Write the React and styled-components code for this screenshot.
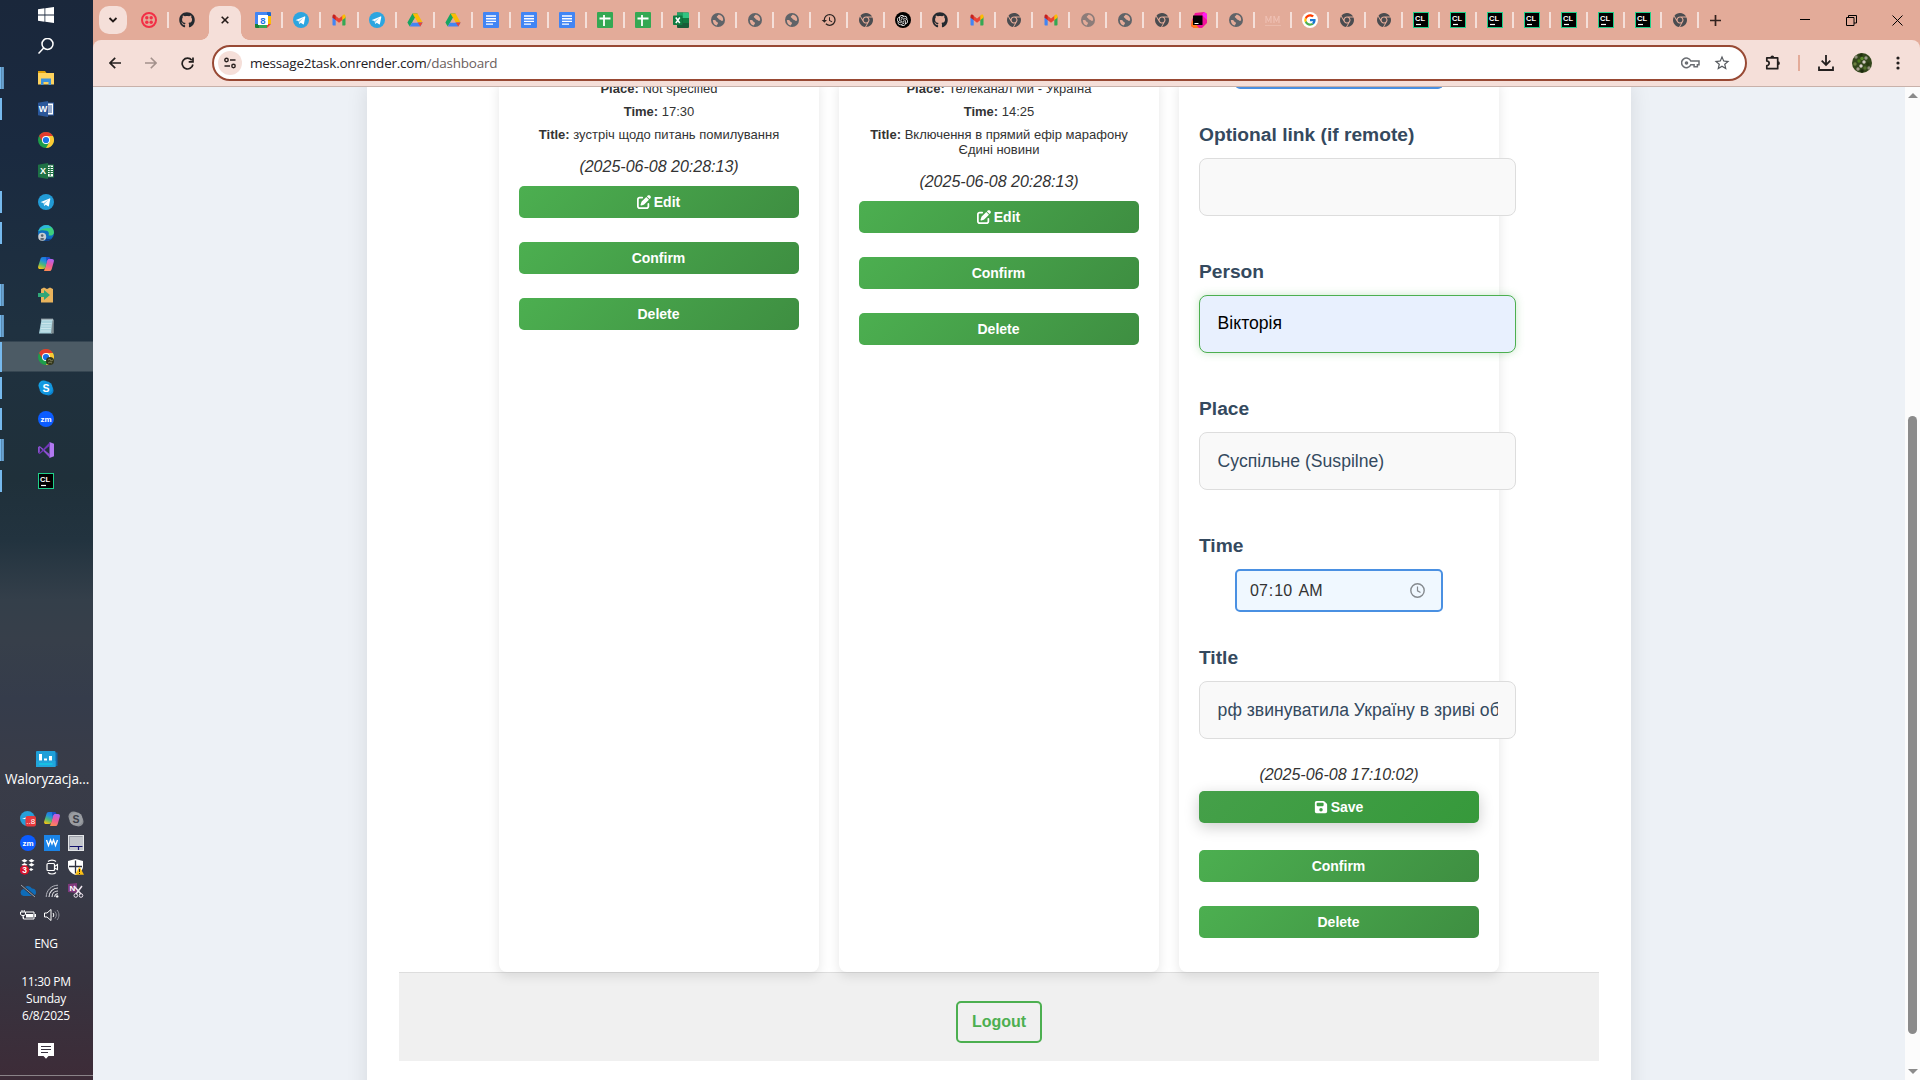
import React from "react";
import styled, { createGlobalStyle, css } from "styled-components";
import { FaGithub, FaPenToSquare, FaFloppyDisk, FaChrome } from "react-icons/fa6";
import { MdHistory, MdStarBorder } from "react-icons/md";
import { SiOpenai } from "react-icons/si";

const Global = createGlobalStyle`
  * { box-sizing: border-box; }
  html, body { margin: 0; padding: 0; overflow: hidden; }
  body { font-family: "Liberation Sans", Arial, sans-serif; color: #333; }
`;

/* ---------- small drawings ---------- */

const Drawing = styled.svg`
  display: block;
  flex: none;
`;

const Art = ({ size = 16, w, h, box = "0 0 16 16", children }) => (
  <Drawing width={w || size} height={h || size} viewBox={box} fill="none">
    {children}
  </Drawing>
);

const ChromeLogo = () => (
  <Art>
    <circle cx="8" cy="8" r="8" fill="#1e9e4a" />
    <path d="M8 4h6.93A8 8 0 0 1 8 16l3.46-6z" fill="#fcc934" />
    <path d="M1.07 4A8 8 0 0 1 14.93 4H8l-3.46 6z" fill="#e33b2e" />
    <circle cx="8" cy="8" r="4" fill="#fff" />
    <circle cx="8" cy="8" r="3.1" fill="#1a73e8" />
  </Art>
);
const ChromeProfile = () => (
  <Art>
    <circle cx="8" cy="8" r="8" fill="#1e9e4a" />
    <path d="M8 4h6.93A8 8 0 0 1 8 16l3.46-6z" fill="#fcc934" />
    <path d="M1.07 4A8 8 0 0 1 14.93 4H8l-3.46 6z" fill="#e33b2e" />
    <circle cx="8" cy="8" r="4" fill="#fff" />
    <circle cx="8" cy="8" r="3.1" fill="#1a73e8" />
    <circle cx="12" cy="12" r="4" fill="#33371c" />
    <path d="M10 11l2-1 1 2 2-1M10 14l2-1 2 1" stroke="#8c8a62" strokeWidth=".8" />
  </Art>
);
const ChromeMono = () => <FaChrome size={14} color="#4a4c50" />;
const Telegram = ({ size = 16, tint = "#2ca5e0" }) => (
  <Art size={size}>
    <circle cx="8" cy="8" r="8" fill={tint} />
    <path d="M2.9 7.9l8.6-3.5c.5-.2.9.1.8.7l-1.4 6.8c-.1.5-.5.6-.9.4L7.7 10.7l-1 1c-.2.2-.5.2-.6-.1L5.5 9.1 3 8.3c-.4-.1-.4-.3-.1-.4z" fill="#fff" />
    <path d="M5.7 9.1l4.8-3.3-3.8 3.9-.3 1.5z" fill={tint} opacity=".55" />
  </Art>
);
const Twilio = () => (
  <Art>
    <circle cx="8" cy="8" r="7" stroke="#f22f46" strokeWidth="2" />
    {[[5.8, 5.8], [10.2, 5.8], [5.8, 10.2], [10.2, 10.2]].map(([x, y]) => (
      <circle key={`${x}-${y}`} cx={x} cy={y} r="1.7" fill="#f22f46" />
    ))}
  </Art>
);
const Calendar = () => (
  <Art>
    <path d="M1 0h11v4H4v8H0V1a1 1 0 0 1 1-1z" fill="#4285f4" />
    <path d="M12 0h3a1 1 0 0 1 1 1v3h-4z" fill="#1967d2" />
    <path d="M12 4h4v8h-4z" fill="#fbbc04" />
    <path d="M4 12h8v4H4z" fill="#34a853" />
    <path d="M0 12h4v4H1a1 1 0 0 1-1-1z" fill="#188038" />
    <path d="M12 12h4l-4 4z" fill="#ea4335" />
    <path d="M3 3h10v10H3z" fill="#fff" />
    <text x="8" y="11.5" fontSize="9.5" fontWeight="700" textAnchor="middle" fill="#1a73e8" fontFamily="Liberation Sans, sans-serif">8</text>
  </Art>
);
const Gmail = () => (
  <Art>
    <path d="M1.5 4.5v8.200c0 .5.4.8.8.8h2.400V7.500z" fill="#4285f4" />
    <path d="M14.500 4.500v8.200c0 .5-.4.8-.8.8h-2.400V7.500z" fill="#34a853" />
    <path d="M4.200 7.800V3.600L8 6.500l3.800-2.900v4.200L8 10.700z" fill="#ea4335" />
    <path d="M1.500 4.200c0-1.500 1.300-2.200 2.400-1.300l.8.600v4.500L1.500 5.700z" fill="#c5221f" />
    <path d="M14.500 4.200c0-1.500-1.300-2.200-2.400-1.300l-.8.600v4.500l3.200-2.300z" fill="#fbbc04" />
  </Art>
);
const Drive = () => (
  <Art>
    <path d="M5.500 1.500h5L5.300 10.300 2.700 14.500.4 10.500z" fill="#16a561" />
    <path d="M5.500 1.500h5l5.100 9h-5z" fill="#fbbc04" />
    <path d="M5.200 10.500h10.400l-2.300 4H2.700z" fill="#4285f4" />
    <path d="M10.700 10.500h4.900l-2.300 4z" fill="#ea4335" />
    <path d="M8 6l2.600 4.500H5.400z" fill="#e3ab99" />
  </Art>
);
const Docs = () => (
  <Art>
    <rect width="16" height="16" rx="1" fill="#4285f4" />
    <path d="M3 4h10M3 6.700h10M3 9.400h10M3 12.100h7" stroke="#fff" strokeWidth="1.400" />
  </Art>
);
const Sheets = () => (
  <Art>
    <rect width="16" height="16" rx="1" fill="#34a853" />
    <path d="M2.500 6.500h11M7 3v11" stroke="#fff" strokeWidth="1.800" />
  </Art>
);
const ExcelNew = () => (
  <Art>
    <path d="M4 .5h11a1 1 0 0 1 1 1V15a1 1 0 0 1-1 1H5a1 1 0 0 1-1-1z" fill="#185c37" />
    <path d="M4 .5h6V6H4z" fill="#21a366" />
    <path d="M10 .5h5a1 1 0 0 1 1 1V6h-6z" fill="#33c481" />
    <path d="M10 6h6v5h-6z" fill="#107c41" />
    <rect y="3.500" width="9.500" height="9.500" rx=".8" fill="#107c41" />
    <path d="M2.800 5.500l4 5.500M6.800 5.500l-4 5.500" stroke="#fff" strokeWidth="1.500" />
  </Art>
);
const Globe = ({ faded }) => (
  <Art>
    <g opacity={faded ? 0.65 : 1}>
      <circle cx="8" cy="8" r="7" fill="#5f6368" />
      <path d="M2.800 8.200c1.700-.4 2.900.2 3.500 1.200.5.900 1.700.6 1.700 1.700s-1 1.100-1.100 2.500C4.500 13.200 3 11.200 2.800 8.200z" fill="#e3ab99" />
      <path d="M8.300 2.700c-.3 1.200-1.600 1.200-1.500 2.200.1.900 1.300.6 1.500 1.500.2 1 1.500.9 2.100 1.700.6.900 1.600 1 2.700.5C13.600 5.200 11.500 2.700 8.300 2.700z" fill="#e3ab99" />
    </g>
  </Art>
);
const OpenAi = () => (
  <RoundBadge $bg="#000">
    <SiOpenai size={11} color="#fff" />
  </RoundBadge>
);
const JetBrains = () => (
  <Art>
    <path d="M4 1l9-1 3 2v9l-5 5H3L0 14l1-6z" fill="#f0149a" />
    <path d="M0 14l1-6 3 3 4 5H3z" fill="#ff7a1a" />
    <path d="M13 0l3 2v6l-5-5z" fill="#ff1cf0" />
    <rect x="2" y="3.500" width="9.500" height="9.500" fill="#000" />
    <path d="M3.500 11.500h4" stroke="#fff" strokeWidth="1" />
  </Art>
);
const MmMark = () => (
  <Art>
    <path d="M1 11V4l2.500 5.500L6 4v7M9 11V4l2.500 5.500L14 4v7" stroke="#f0c2b6" strokeWidth="1" />
    <path d="M0 13.500h16" stroke="#edc0b3" strokeWidth=".7" />
  </Art>
);
const Google = () => (
  <RoundBadge $bg="#fff">
    <Art size={12} box="0 0 48 48">
      <path fill="#FFC107" d="M10 24c0-1.500.3-3 .7-4.400l-6.900-5.300C2.500 17 1 20.400 1 24s1 7 2.600 9.900l7.100-5.500C10.300 27 10 25.500 10 24z" />
      <path fill="#FF3D00" d="M24 10c3.500 0 6.600 1.300 9 3.300l6.600-6.500C35.400 3.200 30 1 24 1 15.200 1 7.500 6.300 3.800 14.300l6.900 5.300C12.600 14 17.800 10 24 10z" />
      <path fill="#4CAF50" d="M24 38c-6.200 0-11.400-4-13.300-9.600l-7.100 5.500C7.300 41.700 15 47 24 47c5.800 0 11-2 15-5.800l-7.200-5.600C29.700 37.200 27 38 24 38z" />
      <path fill="#1976D2" d="M46 20H24v9h12.600c-.8 2.700-2.500 5-4.800 6.600l7.200 5.600C43.500 37 46.500 31 46.500 24c0-1.400-.2-2.700-.5-4z" />
    </Art>
  </RoundBadge>
);
const CLion = () => (
  <Art>
    <rect x=".5" y=".5" width="15" height="15" fill="#000" stroke="#1fd08a" />
    <text x="2" y="8.500" fontSize="7.500" fontWeight="700" fill="#fff" fontFamily="Liberation Sans, sans-serif">CL</text>
    <path d="M3 12.500h5" stroke="#fff" strokeWidth="1.200" />
  </Art>
);

const WindowsLogo = () => (
  <Art>
    <path d="M0 2.200L6.500 1.300v6.200H0zM7.300 1.200L16 0v7.500H7.300zM0 8.400h6.500v6.300L0 13.800zM7.300 8.400H16V16l-8.700-1.200z" fill="#fff" />
  </Art>
);
const SearchGlyph = () => (
  <Art>
    <circle cx="9.500" cy="6" r="5.500" stroke="#fff" strokeWidth="1.500" />
    <path d="M5.700 10L.5 15.500" stroke="#fff" strokeWidth="1.500" />
  </Art>
);
const Folder = () => (
  <Art>
    <path d="M0 1h7l1.500 2H0z" fill="#e0a20c" />
    <path d="M0 3h16v11.500H0z" fill="#fdd35e" />
    <path d="M3 8.500h10v6.500h-2.500v-3h-5v3H3z" fill="#3b92dd" />
  </Art>
);
const OfficeOld = ({ tint, letter, sheet }) => (
  <Art>
    <rect x="8" y="2" width="7.500" height="12" fill="#fff" stroke={tint} />
    {sheet ? (
      <path d="M10 4.500h5M10 6.500h5M10 8.500h5M10 10.500h5M12.200 3v10" stroke={tint} />
    ) : (
      <path d="M10 5h4M10 7h4M10 9h4M10 11h4" stroke={tint} />
    )}
    <path d="M0 1.700L10 0v16L0 14.300z" fill={tint} />
    <text x="5" y="11.400" fontSize="9" fontWeight="700" textAnchor="middle" fill="#fff" fontFamily="Liberation Sans, sans-serif">{letter}</text>
  </Art>
);
const EdgeLogo = () => (
  <Art>
    <circle cx="8" cy="8" r="8" fill="#0f6fc0" />
    <path d="M.5 6C2 1.500 6-.2 9.500.2 14 .8 16.300 5 15.900 8c-.4 2.300-3.400 3.200-5.400 2.200.8-1.500.5-3.700-1.700-4.400C6 4.900 2 5.200.5 6z" fill="#3fd07c" />
    <path d="M.3 6.500C2 1.500 6-.2 9.500.2 11 .5 12.500 1.500 13 3 9 2.500 3 3.500.3 6.500z" fill="#2cb6dc" />
    <path d="M5.500 9c.5 4 4 6 8.500 4.500-2 2-4 2.500-6 2.500-2 0-3-4-2.500-7z" fill="#123f87" />
    <circle cx="4.200" cy="11.800" r="4" fill="#c9cdd1" />
    <circle cx="4.200" cy="10.600" r="1.300" fill="#5d6570" />
    <path d="M1.900 14c.4-1.500 4.200-1.500 4.600 0-1.300 1.300-3.300 1.300-4.600 0z" fill="#5d6570" />
  </Art>
);
const Copilot = () => (
  <Art>
    <defs>
      <linearGradient id="cpA" gradientUnits="userSpaceOnUse" x1="8" y1="1" x2="3" y2="13">
        <stop offset="0" stopColor="#1b6fe0" /><stop offset=".35" stopColor="#2390dc" /><stop offset=".65" stopColor="#4fb877" /><stop offset="1" stopColor="#f3c312" />
      </linearGradient>
      <linearGradient id="cpB" gradientUnits="userSpaceOnUse" x1="13" y1="3" x2="9" y2="15">
        <stop offset="0" stopColor="#b062f2" /><stop offset=".5" stopColor="#ee5a9c" /><stop offset="1" stopColor="#fd8a52" />
      </linearGradient>
    </defs>
    <path d="M11.500 15H6L7 12 9 4.500C9.300 3.500 10 3 11 3h3c1.700 0 2.200 1.300 1.800 2.700l-2 7C13.400 14.200 12.700 15 11.500 15z" fill="url(#cpB)" />
    <path d="M4.800 1h5.400L7.600 10.800C7.200 12.300 6.500 13 5.200 13H2C.3 13-.2 11.700.2 10.300l2.200-7C2.800 1.800 3.500 1 4.800 1z" fill="url(#cpA)" />
    <path d="M8 1h2.700c1 0 1.500.8 1.800 2H11C10 3 9.300 3.500 9 4.500L8.500 6z" fill="#1d4fc4" />
  </Art>
);
const PackageArrow = () => (
  <Art>
    <path d="M3 2l3-1.500L9 2l3-1.500L15 2v13.500H3z" fill="#e9b35c" />
    <path d="M0 6h6V3l6 5-6 5v-3H0z" fill="#2fa678" />
  </Art>
);
const Notepad = () => (
  <Art>
    <path d="M3.500 1.500H15.500L14 15.500H1z" fill="#a9d3dd" />
    <path d="M14.500 2h1.300v13.500H13z" fill="#7f8d92" />
    <path d="M4 .5v2M6 .5v2M8 .5v2M10 .5v2M12 .5v2M14 .5v2" stroke="#eef4f5" strokeWidth=".9" />
    <path d="M3.500 5.500h10M3.200 8h10M3 10.500h10M2.600 13h10" stroke="#d8eef2" strokeWidth=".7" />
  </Art>
);
const Skype = ({ gray }) => (
  <Art>
    <circle cx="5.500" cy="5.500" r="5" fill={gray ? "#8d9096" : "#15a0e3"} />
    <circle cx="10.500" cy="10.500" r="5" fill={gray ? "#8d9096" : "#0b82cf"} />
    <circle cx="8" cy="8" r="6.700" fill={gray ? "#9a9da2" : "#1297e0"} />
    <text x="8" y="11.800" fontSize="10.500" fontWeight="700" textAnchor="middle" fill={gray ? "#3c4049" : "#fff"} fontFamily="Liberation Sans, sans-serif">S</text>
  </Art>
);
const Zoom = () => (
  <Art>
    <circle cx="8" cy="8" r="8" fill="#0b5cff" />
    <text x="8" y="10.500" fontSize="8" fontWeight="700" textAnchor="middle" fill="#fff" fontFamily="Liberation Sans, sans-serif">zm</text>
  </Art>
);
const VisualStudio = () => (
  <Art>
    <path d="M11.500 0L16 1.800v12.400L11.500 16z" fill="#b179f1" />
    <path d="M0 5l1.800-1L12 12.500V16L1.800 5.500v5L0 11z" fill="#8a4fd0" />
    <path d="M0 11l1.800 1L12 3.500V0L1.800 10.500z" fill="#7236b8" />
  </Art>
);

const Widget = () => (
  <Art w={22} h={16} box="0 0 22 16">
    <path d="M16 1.500h5.500V15H16z" fill="#1565a5" />
    <rect width="19.500" height="16" rx="1" fill="#1f9fd8" />
    <path d="M0 10h19.500v6H0z" fill="#22a6dc" />
    <path d="M4.500 9.500V3M9.500 9.500V7.500M14.500 9.500V5" stroke="#fff" strokeWidth="3" />
    <path d="M3 13h13.500" stroke="#15c8e6" strokeWidth="1.500" />
  </Art>
);
const TelegramBadge = () => (
  <Art>
    <circle cx="7.500" cy="7.500" r="7.500" fill="#279fd8" />
    <path d="M2 8l7-3v3z" fill="#fff" />
    <rect x="5.500" y="5" width="10.500" height="10.500" rx="2" fill="#e8393d" />
    <text x="10.800" y="13.300" fontSize="8" textAnchor="middle" fill="#fff" fontFamily="Liberation Sans, sans-serif">..8</text>
  </Art>
);
const WaveTray = () => (
  <Art>
    <rect width="16" height="16" fill="#1b84e8" />
    <path d="M2.500 5l2 5.500 2-5.500 1.500 4 1.500-4 2 5.500 2-5.500" stroke="#fff" strokeWidth="1.300" />
  </Art>
);
const MonitorTray = () => (
  <Art>
    <rect x=".5" y=".5" width="15" height="15" fill="#c3c6cc" stroke="#e3e5e8" />
    <path d="M1.500 11.500h13M10.500 11.500V15" stroke="#12126e" strokeWidth="1.200" />
    <path d="M1.500 14V1.500h13" stroke="#8a8c98" strokeWidth=".7" />
  </Art>
);
const DropboxBadge = () => (
  <Art>
    <path d="M4.500 0l3 1.700-3 1.700-3-1.700zM11.500 0l3 1.700-3 1.700-3-1.700zM4.500 4l3 1.700-3 1.700-3-1.700zM11.500 4l3 1.700-3 1.700-3-1.700zM11 9l2.500 1.500L11 12l-2-1.500z" fill="#fff" />
    <circle cx="4.500" cy="11" r="4.700" fill="#d4112b" />
    <text x="4.500" y="14" fontSize="8.500" fontWeight="700" textAnchor="middle" fill="#fff" fontFamily="Liberation Sans, sans-serif">3</text>
  </Art>
);
const MeetNow = () => (
  <Art>
    <path d="M4 2.500C6 .6 10 .6 12 2.500M4 13.500c2 1.900 6 1.900 8 0" stroke="#fff" strokeWidth="1.100" />
    <rect x="3" y="4.500" width="7.500" height="7" rx="1" stroke="#fff" strokeWidth="1.200" />
    <path d="M10.500 7.500L13.500 5.500v5l-3-1.500" stroke="#fff" strokeWidth="1.100" />
  </Art>
);
const Defender = () => (
  <Art>
    <path d="M7.500 0L15 2v5c0 4.500-3 7-7.500 9C3 14 0 11.500 0 7V2z" fill="#fff" />
    <path d="M7.500 1.500v13M1 7.500h13" stroke="#2f3140" strokeWidth="1.300" />
    <path d="M11.500 7.500l4.500 8.300H7z" fill="#fbbf15" />
    <path d="M11.500 10v3M11.500 14v1" stroke="#222" strokeWidth="1" />
  </Art>
);
const CloudOff = () => (
  <Art>
    <path d="M3.500 13A3.500 3.500 0 0 1 3 6.200 5 5 0 0 1 12 5.500 3.800 3.800 0 0 1 13 13z" fill="#0f6cb8" />
    <path d="M1 2l14 12" stroke="#363844" strokeWidth="2.500" />
    <path d="M1 2l14 12" stroke="#9aa0a8" strokeWidth="1" />
  </Art>
);
const Wifi = () => (
  <Art>
    <path d="M5 14C5 9 9 5 14 5M8 14c0-3.500 2.500-6 6-6M10.800 14c0-2 1.200-3.200 3.200-3.200" stroke="#e6e6ea" strokeWidth="1.100" />
    <path d="M2.200 14C2.200 7.500 7.500 2.200 14 2.200" stroke="#b4b5bd" strokeWidth="1" />
    <circle cx="13.200" cy="13.400" r="1.200" fill="#fff" />
  </Art>
);
const SnipNote = () => (
  <Art>
    <path d="M0 1l9-1v10L0 9z" fill="#80397b" />
    <text x="4.500" y="8.300" fontSize="8" fontWeight="700" textAnchor="middle" fill="#fff" fontFamily="Liberation Sans, sans-serif">N</text>
    <path d="M6 3l7 8M14 3l-6 8" stroke="#f0e6f0" strokeWidth="1.500" />
    <circle cx="7.800" cy="12.500" r="1.800" stroke="#f0e6f0" />
    <circle cx="13" cy="12.500" r="1.800" stroke="#f0e6f0" />
  </Art>
);
const Battery = () => (
  <Art>
    <path d="M5.500 5h8.500v7H3.500V9.500" stroke="#fff" />
    <path d="M6 7h7v3.500H6zM14.500 7H16v3h-1.500z" fill="#fff" />
    <path d="M.5 5h5v2.500l-1.500 1H2l-1.500-1zM2 5V3M4.200 5V3M3 8.500v3" stroke="#fff" />
  </Art>
);
const Volume = () => (
  <Art>
    <path d="M.5 6h2.500L7 2.500v11L3 10H.5z" stroke="#fff" />
    <path d="M9 6c1 1.200 1 2.800 0 4" stroke="#fff" />
    <path d="M11 4.500c1.800 2 1.800 5 0 7M13 3c2.600 3 2.600 7 0 10" stroke="#8f909a" />
  </Art>
);
const ActionCenter = () => (
  <Art>
    <path d="M0 0h16v13h-5.500L8 15.700 5.500 13H0z" fill="#fff" />
    <path d="M3 3.500h10M3 6.500h10M3 9.500h7" stroke="#3a3340" />
  </Art>
);
const Avatar = () => (
  <Art size={20} box="0 0 20 20">
    <defs><clipPath id="avatarClip"><circle cx="10" cy="10" r="10" /></clipPath></defs>
    <g clipPath="url(#avatarClip)">
      <rect width="20" height="20" fill="#33461c" />
      {[[4, 4, "#8c8d78"], [9, 2, "#20300d"], [14, 5, "#9a9a8b"], [7, 8, "#4e7a1f"], [12, 9, "#cfc9c0"], [3, 11, "#6c8040"], [16, 11, "#26380f"], [9, 13, "#dcd3cf"], [13, 15, "#55722d"], [6, 16, "#a49c8e"], [10, 18, "#1c290d"], [17, 15, "#8f8c7c"], [10, 5.5, "#5c8a2b"]].map(([x, y, c]) => (
        <circle key={`${x}-${y}`} cx={x} cy={y} r="1.700" fill={c} />
      ))}
    </g>
  </Art>
);

/* ---------- shell ---------- */

const Screen = styled.div`
  display: flex;
  width: 1920px;
  height: 1080px;
  overflow: hidden;
`;

const RoundBadge = styled.span`
  display: flex;
  align-items: center;
  justify-content: center;
  width: 16px;
  height: 16px;
  border-radius: 50%;
  background: ${(p) => p.$bg};
`;

const Taskbar = styled.aside`
  display: flex;
  flex-direction: column;
  width: 93px;
  height: 1080px;
  flex: none;
  background: linear-gradient(#1a273b 0, #1a2a40 150px, #1f3140 330px, #1f303a 480px, #22333f 540px, #343f4a 600px, #373f4a 640px, #353c4b 700px, #393c48 770px, #373a47 880px, #37333f 980px, #3d2c38 1076px);
  color: #fff;
  font-family: "Open Sans", "Noto Sans", sans-serif;
`;

const TaskButton = styled.div`
  display: flex;
  align-items: center;
  justify-content: center;
  width: 92px;
  height: ${(p) => p.$h}px;
`;

const AppButton = styled.div`
  display: flex;
  align-items: center;
  height: 31px;
  background: ${(p) => (p.$current ? "linear-gradient(transparent 0, #4c5b65 1px, #4c5b65 30px, transparent 31px)" : "none")};
`;

const RunMark = styled.span`
  width: 4px;
  height: ${(p) => (p.$tall ? 30 : 22)}px;
  margin-right: 34px;
  background: ${(p) =>
    p.$kind === "many"
      ? "linear-gradient(90deg, #76b9ed 1px, #588bb4 1px, #588bb4 2px, #6ea9d8 2px, #5a8db6 4px)"
      : p.$kind === "one"
      ? "linear-gradient(90deg, #76b9ed 2px, transparent 2px)"
      : "none"};
`;

const Spacer = styled.div`
  flex: 1;
`;

const WidgetBlock = styled.div`
  display: flex;
  flex-direction: column;
  align-items: center;
  gap: 2px;
  height: 60px;
  padding-left: 1px;
  font-size: 13.600px;
  line-height: 20px;
  letter-spacing: -0.150px;
`;

const Tray = styled.div`
  display: grid;
  grid-template-columns: repeat(3, 16px);
  align-content: start;
  gap: 8px;
  padding-left: 20px;
  height: 124px;
`;

const TrayText = styled.div`
  width: 92px;
  text-align: center;
  font-size: 12px;
  line-height: 17px;
  letter-spacing: -0.250px;
  height: ${(p) => p.$h}px;
`;

const BottomBar = styled.div`
  display: flex;
  flex-direction: column;
  align-items: center;
  width: 92px;
  height: 37px;

  &::after {
    content: "";
    width: 93px;
    height: 1px;
    margin-top: 16px;
    background: #8a8388;
  }
`;

const Browser = styled.section`
  display: flex;
  flex-direction: column;
  flex: 1;
  min-width: 0;
  background: #e3ab99;
`;

const TabStrip = styled.div`
  display: flex;
  align-items: center;
  height: 40px;
  padding-left: 6px;
`;

const TabSearch = styled.button`
  display: flex;
  align-items: center;
  justify-content: center;
  width: 28px;
  height: 28px;
  margin-right: 4px;
  padding: 0;
  border: 0;
  border-radius: 10px;
  background: #f5dfd9;
`;

const Tab = styled.div`
  display: flex;
  align-items: center;
  justify-content: center;
  width: ${(p) => p.$w}px;
  height: 16px;
  flex: none;
  border-right: 2px solid ${(p) => (p.$last ? "transparent" : "#f5dfd9")};
`;

const ActiveTab = styled.div`
  position: relative;
  display: flex;
  align-items: center;
  justify-content: center;
  align-self: flex-end;
  width: 32px;
  height: 34px;
  margin: 0 4px 0 2px;
  padding-bottom: 6px;
  border-radius: 10px 10px 0 0;
  background: #f5dfd9;

  &::before,
  &::after {
    content: "";
    position: absolute;
    bottom: 0;
    width: 8px;
    height: 8px;
  }
  &::before {
    left: -8px;
    background: radial-gradient(circle at 0 0, transparent 7.500px, #f5dfd9 8px);
  }
  &::after {
    right: -8px;
    background: radial-gradient(circle at 100% 0, transparent 7.500px, #f5dfd9 8px);
  }
`;

const StripButton = styled.div`
  display: flex;
  align-items: center;
  justify-content: center;
  width: ${(p) => p.$w}px;
  height: 40px;
`;

const Toolbar = styled.div`
  display: flex;
  align-items: center;
  height: 47px;
  padding: 0 4px;
  border-radius: 8px 8px 0 0;
  border-bottom: 1px solid #c8b1aa;
  background: #f5dfd9;
`;

const ToolButton = styled.div`
  display: flex;
  align-items: center;
  justify-content: center;
  width: 36px;
  height: 34px;
  padding-left: ${(p) => p.$nudge || 0}px;
`;

const Omnibox = styled.div`
  display: flex;
  align-items: center;
  width: 1535px;
  height: 36px;
  margin: 0 7px;
  padding: 0 7px 0 4px;
  border: 2px solid #984934;
  border-radius: 18px;
  background: #fff;
`;

const SiteChip = styled.span`
  display: flex;
  align-items: center;
  justify-content: center;
  width: 24px;
  height: 24px;
  border-radius: 50%;
  background: #f5dfd9;
`;

const Address = styled.span`
  flex: 1;
  margin-left: 8px;
  font-family: "Open Sans", "Noto Sans", sans-serif;
  font-size: 13.500px;
  letter-spacing: -0.230px;
  color: #24201f;

  span {
    color: #6b605d;
  }
`;

const OmniIcon = styled.span`
  display: flex;
  justify-content: center;
  width: 32px;
  color: #55595e;
`;

const ToolDivider = styled.span`
  width: 2px;
  height: 16px;
  margin: 0 8px;
  background: #e3ab99;
`;

/* ---------- page ---------- */

const Viewport = styled.div`
  display: flex;
  flex: 1;
  min-height: 0;
  background: #edf1f6;
`;

const PageArea = styled.main`
  display: flex;
  justify-content: center;
  width: 1812px;
  overflow: hidden;
`;

const Container = styled.div`
  width: 1264px;
  height: 1020px;
  margin-top: -6px;
  padding: 0 32px;
  background: #fff;
  box-shadow: 0 4px 20px rgba(0, 0, 0, 0.1);
`;

const Columns = styled.div`
  position: relative;
  display: flex;
  justify-content: center;
  gap: 20px;
  height: 891px;
`;

const Card = styled.article`
  width: 320px;
  padding: 0 20px;
  border-radius: 0 0 8px 8px;
  background: #fff;
  box-shadow: 0 4px 12px rgba(0, 0, 0, 0.1);
  text-align: center;
`;

const Detail = styled.p`
  margin: 0 0 8px;
  font-size: 13px;
  line-height: 15px;
`;

const Stamp = styled.em`
  display: block;
  height: 18px;
  margin: ${(p) => p.$top}px 0 ${(p) => p.$bottom}px;
  font-size: 16px;
  line-height: 18px;
`;

const Button = styled.button`
  display: flex;
  align-items: center;
  justify-content: center;
  gap: 3px;
  width: 100%;
  height: 32px;
  margin-bottom: 24px;
  padding: 0 1px 0 0;
  border: 0;
  border-radius: 5px;
  background: linear-gradient(135deg, #4caf50, #3e8e41);
  color: #fff;
  font: bold 14px "Liberation Sans", Arial, sans-serif;

  ${(p) =>
    p.$raised &&
    css`
      margin-bottom: 27px;
      background: linear-gradient(135deg, #45a049, #36993b);
      box-shadow: 0 4px 15px rgba(0, 0, 0, 0.2);
    `}
`;

const DateInputEdge = styled.div`
  width: 208px;
  height: 8px;
  margin: 0 auto 33px;
  border: 2px solid #4a90e2;
  border-top: 0;
  border-radius: 0 0 5px 5px;
  background: #f0f8ff;
`;

const Field = styled.div`
  width: 317.200px;
  margin-bottom: ${(p) => p.$gap}px;
  text-align: left;
`;

const Label = styled.label`
  display: block;
  height: 24px;
  margin-bottom: 12px;
  font-size: 19.200px;
  font-weight: bold;
  line-height: 26px;
  color: #34495e;
`;

const TextInput = styled.div`
  display: flex;
  align-items: center;
  height: 57.600px;
  padding: 2px 17.600px 0;
  border: 1px solid #ddd;
  border-radius: 8px;
  background: #f9f9f9;
  color: #34495e;
  font-size: 17.600px;

  span {
    overflow: hidden;
    white-space: nowrap;
  }

  ${(p) =>
    p.$filled &&
    css`
      padding-top: 0;
      border-color: #4caf50;
      background: #e8f0fe;
      color: #000;
      box-shadow: 0 0 8px rgba(76, 175, 80, 0.3);
    `}
`;

const TimeInput = styled.div`
  display: flex;
  align-items: center;
  justify-content: space-between;
  width: 208px;
  height: 43px;
  margin-left: 36px;
  padding: 1px 16px 0 12px;
  border: 2px solid #4a90e2;
  border-radius: 5px;
  background: #f0f8ff;
  font-size: 16px;
  color: #333;
`;

const TimePart = styled.span`
  padding: 0 1px;
`;

const Footer = styled.footer`
  display: flex;
  justify-content: center;
  height: 89px;
  padding-top: 28px;
  border-top: 1px solid #ddd;
  background: #f0f0f0;
`;

const Logout = styled.a`
  display: flex;
  align-items: center;
  justify-content: center;
  width: 86px;
  height: 42px;
  border: 2px solid #4caf50;
  border-radius: 5px;
  color: #4caf50;
  font-size: 16px;
  font-weight: bold;
`;

const ScrollTrack = styled.div`
  display: flex;
  flex-direction: column;
  align-items: center;
  width: 15px;
  padding: 6px 0;
  background: #fcfcfc;
`;

const ScrollThumb = styled.div`
  width: 9px;
  height: 618px;
  margin: 318px 0 auto;
  border-radius: 5px;
  background: #8b8b8b;
`;

const apps = [
  { icon: <Folder />, run: "many" },
  { icon: <OfficeOld tint="#2b579a" letter="W" />, run: "one" },
  { icon: <ChromeLogo /> },
  { icon: <OfficeOld tint="#1e7145" letter="X" sheet /> },
  { icon: <Telegram tint="#229bd6" />, run: "one" },
  { icon: <EdgeLogo />, run: "one" },
  { icon: <Copilot /> },
  { icon: <PackageArrow />, run: "many" },
  { icon: <Notepad />, run: "many" },
  { icon: <ChromeProfile />, run: "one", current: true },
  { icon: <Skype />, run: "one" },
  { icon: <Zoom />, run: "one" },
  { icon: <VisualStudio />, run: "many" },
  { icon: <CLion />, run: "one" },
];

const GraySkype = () => <Skype gray />;
const tray = [TelegramBadge, Copilot, GraySkype, Zoom, WaveTray, MonitorTray, DropboxBadge, MeetNow, Defender, CloudOff, Wifi, SnipNote, Battery, Volume];

const GitHub = () => <FaGithub size={16} color="#24292f" />;
const History = () => <MdHistory size={16} color="#2b2321" />;
const FadedGlobe = () => <Globe faded />;

const wideTabs = [Calendar, Telegram, Gmail, Telegram, Drive, Drive, Docs, Docs, Docs, Sheets, Sheets];
const narrowTabs = [
  ExcelNew, Globe, Globe, Globe, History, ChromeMono, OpenAi, GitHub, Gmail, ChromeMono, Gmail, FadedGlobe, Globe,
  ChromeMono, JetBrains, Globe, MmMark, Google, ChromeMono, ChromeMono, CLion, CLion, CLion, CLion, CLion, CLion, CLion, ChromeMono,
];

const meetings = [
  {
    rows: [["Place", "Not specified"], ["Time", "17:30"], ["Title", "зустріч щодо питань помилування"]],
    stamp: "(2025-06-08 20:28:13)",
  },
  {
    rows: [["Place", "Телеканал Ми - Україна"], ["Time", "14:25"], ["Title", "Включення в прямий ефір марафону Єдині новини"]],
    stamp: "(2025-06-08 20:28:13)",
  },
];

function WindowsTaskbar() {
  return (
    <Taskbar>
      <TaskButton $h={30}><WindowsLogo /></TaskButton>
      <TaskButton $h={32}><SearchGlyph /></TaskButton>
      {apps.map((app, i) => (
        <AppButton key={i} $current={app.current}>
          <RunMark $kind={app.run} $tall={app.current} />
          {app.icon}
        </AppButton>
      ))}
      <Spacer />
      <WidgetBlock>
        <Widget />
        Waloryzacja...
      </WidgetBlock>
      <Tray>
        {tray.map((Icon, i) => <Icon key={i} />)}
      </Tray>
      <TrayText $h={38}>ENG</TrayText>
      <TrayText $h={70}>
        11:30 PM<br />Sunday<br />6/8/2025
      </TrayText>
      <BottomBar><ActionCenter /></BottomBar>
    </Taskbar>
  );
}

function BrowserChrome() {
  return (
    <>
      <TabStrip>
        <TabSearch>
          <Art size={10} box="0 0 10 10"><path d="M1.500 3L5 6.500 8.500 3" stroke="#231a18" strokeWidth="1.800" /></Art>
        </TabSearch>
        <Tab $w={38}><Twilio /></Tab>
        <Tab $w={38} $last><GitHub /></Tab>
        <ActiveTab>
          <Art size={8} box="0 0 8 8"><path d="M.7.7l6.600 6.600M7.300.7L.7 7.300" stroke="#231a18" strokeWidth="1.600" /></Art>
        </ActiveTab>
        {wideTabs.map((Icon, i) => <Tab key={i} $w={38}><Icon /></Tab>)}
        {narrowTabs.map((Icon, i) => <Tab key={i} $w={37}><Icon /></Tab>)}
        <StripButton $w={32}>
          <Art size={11} box="0 0 11 11"><path d="M5.500 0v11M0 5.500h11" stroke="#33221e" strokeWidth="1.700" /></Art>
        </StripButton>
        <Spacer />
        <StripButton $w={46}>
          <Art size={10} box="0 0 10 10"><path d="M0 4.500h10" stroke="#000" /></Art>
        </StripButton>
        <StripButton $w={46}>
          <Art size={11} box="0 0 11 11"><path d="M.5 2.500h7.500V10.500H.5zM2.500 2.500V.5h8v7.500H8" stroke="#000" /></Art>
        </StripButton>
        <StripButton $w={46}>
          <Art size={11} box="0 0 11 11"><path d="M.5.5l10 10M10.500.5l-10 10" stroke="#000" /></Art>
        </StripButton>
      </TabStrip>
      <Toolbar>
        <ToolButton>
          <Art size={12} box="0 0 12 12"><path d="M12 6H1.200M6.200.8L1 6l5.200 5.200" stroke="#231f1e" strokeWidth="1.700" /></Art>
        </ToolButton>
        <ToolButton>
          <Art size={12} box="0 0 12 12"><path d="M0 6h10.800M5.800.8L11 6l-5.200 5.200" stroke="#a3918c" strokeWidth="1.600" /></Art>
        </ToolButton>
        <ToolButton>
          <Art size={13} box="0 0 13 13"><path d="M10.800 3.200A5.400 5.400 0 1 0 11.900 7.500M12 .5v4.300H7.700" stroke="#231f1e" strokeWidth="1.700" /></Art>
        </ToolButton>
        <Omnibox>
          <SiteChip>
            <Art size={12} box="0 0 12 12">
              <circle cx="2.500" cy="3" r="1.700" stroke="#2b2220" strokeWidth="1.400" />
              <circle cx="9.500" cy="9" r="1.700" stroke="#2b2220" strokeWidth="1.400" />
              <path d="M6 3h5.500M.5 9H6" stroke="#2b2220" strokeWidth="1.600" />
            </Art>
          </SiteChip>
          <Address>message2task.onrender.com<span>/dashboard</span></Address>
          <OmniIcon>
            <Art w={19} h={12} box="0 0 19 12">
              <path d="M9.800 4H18v3.700h-1.600v2h-3.300v-2H9.800A4.800 4.800 0 1 1 9.800 4z" stroke="#6a6d72" strokeWidth="1.500" />
              <circle cx="5.500" cy="6" r="1.800" fill="#6a6d72" />
            </Art>
          </OmniIcon>
          <OmniIcon><MdStarBorder size={18} /></OmniIcon>
        </Omnibox>
        <ToolButton $nudge={2}>
          <Art w={16} h={16}>
            <path d="M1.800 2.800h10.900v10.900H1.800v-3a2.100 2.100 0 0 0 0-4.700z" stroke="#231f1e" strokeWidth="1.700" strokeLinejoin="round" />
            <path d="M5.400 2.500a1.900 1.900 0 0 1 3.800 0zM13 6.300a1.900 1.900 0 0 1 0 3.800z" fill="#231f1e" />
          </Art>
        </ToolButton>
        <ToolDivider />
        <ToolButton>
          <Art size={16}><path d="M8 0v9.500M3.700 5.700L8 10l4.300-4.300M1 11.500V15h14v-3.500" stroke="#231f1e" strokeWidth="1.800" /></Art>
        </ToolButton>
        <ToolButton><Avatar /></ToolButton>
        <ToolButton>
          <Art w={4} h={14} box="0 0 4 14">
            <circle cx="2" cy="2" r="1.600" fill="#231f1e" />
            <circle cx="2" cy="7" r="1.600" fill="#231f1e" />
            <circle cx="2" cy="12" r="1.600" fill="#231f1e" />
          </Art>
        </ToolButton>
      </Toolbar>
    </>
  );
}

function MeetingCard({ rows, stamp }) {
  return (
    <Card>
      {rows.map(([name, value]) => (
        <Detail key={name}><b>{name}:</b> {value}</Detail>
      ))}
      <Stamp $top={16} $bottom={10}>{stamp}</Stamp>
      <Button><FaPenToSquare size={14} />Edit</Button>
      <Button>Confirm</Button>
      <Button>Delete</Button>
    </Card>
  );
}

function EditCard() {
  return (
    <Card>
      <DateInputEdge />
      <Field $gap={43.4}>
        <Label>Optional link (if remote)</Label>
        <TextInput />
      </Field>
      <Field $gap={43.4}>
        <Label>Person</Label>
        <TextInput $filled><span>Вікторія</span></TextInput>
      </Field>
      <Field $gap={43.4}>
        <Label>Place</Label>
        <TextInput><span>Суспільне (Suspilne)</span></TextInput>
      </Field>
      <Field $gap={33}>
        <Label>Time</Label>
        <TimeInput>
          <div>
            <TimePart>07</TimePart>:<TimePart>10</TimePart> <TimePart>AM</TimePart>
          </div>
          <Art size={15} box="0 0 15 15">
            <circle cx="7.500" cy="7.500" r="6.700" stroke="#858a8f" strokeWidth="1.400" />
            <path d="M7.500 3.500v4.300l3 1.800" stroke="#858a8f" strokeWidth="1.200" />
          </Art>
        </TimeInput>
      </Field>
      <Field $gap={27.4}>
        <Label>Title</Label>
        <TextInput><span>рф звинуватила Україну в зриві обміну</span></TextInput>
      </Field>
      <Stamp $top={0} $bottom={7}>(2025-06-08 17:10:02)</Stamp>
      <Button $raised><FaFloppyDisk size={14} />Save</Button>
      <Button>Confirm</Button>
      <Button>Delete</Button>
    </Card>
  );
}

export default function App() {
  return (
    <>
      <Global />
      <Screen>
        <WindowsTaskbar />
        <Browser>
          <BrowserChrome />
          <Viewport>
            <PageArea>
              <Container>
                <Columns>
                  {meetings.map((m, i) => <MeetingCard key={i} {...m} />)}
                  <EditCard />
                </Columns>
                <Footer><Logout>Logout</Logout></Footer>
              </Container>
            </PageArea>
            <ScrollTrack>
              <Art w={10} h={5} box="0 0 10 5"><path d="M5 0l5 5H0z" fill="#8b8b8b" /></Art>
              <ScrollThumb />
              <Art w={10} h={5} box="0 0 10 5"><path d="M5 5L0 0h10z" fill="#8b8b8b" /></Art>
            </ScrollTrack>
          </Viewport>
        </Browser>
      </Screen>
    </>
  );
}
